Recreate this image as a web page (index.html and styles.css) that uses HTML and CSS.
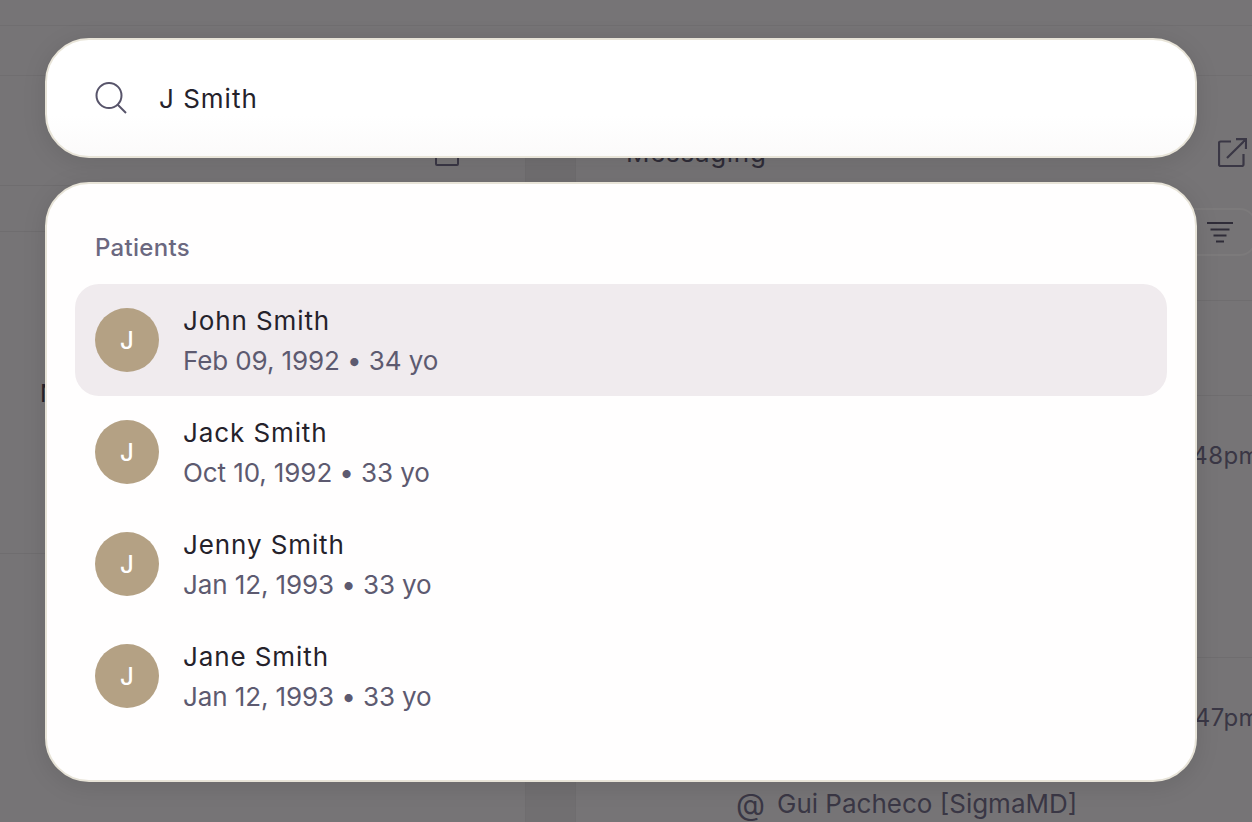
FILE: index.html
```html
<!DOCTYPE html>
<html lang="en">
<head>
    <meta charset="UTF-8">
    <meta name="viewport" content="width=device-width, initial-scale=1.0">
    <title>Patient search</title>
    <link rel="stylesheet" href="styles.css">
</head>
<body>
    <!-- Dimmed app behind the search overlay -->
    <div class="app">
        <div class="topbar"></div>
        <div class="subbar"></div>
        <div class="columns">
            <div class="left-pane">
                <div class="left-head">
                    <span class="head-square"></span>
                </div>
                <div class="left-tabs"></div>
                <div class="left-card">
                    <span class="card-letter">N</span>
                </div>
            </div>
            <div class="gutter"></div>
            <div class="right-pane">
                <div class="right-head">
                    <span class="right-title">Messaging</span>
                    <svg class="open-icon" width="29" height="29" viewBox="0 0 29 29" fill="none" stroke="#3a3745" stroke-width="2.2">
                        <path d="M13 3.500H2.500a1.500 1.500 0 0 0-1.500 1.500V26.500a1.500 1.500 0 0 0 1.500 1.500H24a1.500 1.500 0 0 0 1.500-1.500V16"/>
                        <path d="M18 1.200H28V11M28 1.200L9 20"/>
                    </svg>
                </div>
                <div class="filter-row">
                    <div class="filter-btn">
                        <svg width="28" height="22" viewBox="0 0 28 22" stroke="#2f2c38" stroke-width="2" fill="none">
                            <path d="M1 1H27M4.500 7.500H23.500M7.500 13.500H20.500M10 19.500H18"/>
                        </svg>
                    </div>
                </div>
                <div class="thread thread-short"></div>
                <div class="thread thread-tall"><span class="thread-time">2:48pm</span></div>
                <div class="thread thread-last">
                    <span class="thread-time">2:47pm</span>
                    <div class="mention">
                        <span class="mention-at">@</span>
                        <span>Gui Pacheco [SigmaMD]</span>
                    </div>
                </div>
            </div>
        </div>
    </div>

    <div class="overlay">
        <div class="search-box">
            <svg class="search-icon" width="32" height="32" viewBox="0 0 32 32" fill="none" stroke="#57546a" stroke-width="2">
                <circle cx="14" cy="13.500" r="12.500"/>
                <path d="M22.500 22.500L31 31"/>
            </svg>
            <span class="search-text">J Smith</span>
        </div>

        <div class="results">
            <div class="results-label">Patients</div>

            <div class="patient active">
                <div class="avatar">J</div>
                <div class="patient-info">
                    <div class="patient-name">John Smith</div>
                    <div class="patient-meta">Feb 09, 1992 • 34 yo</div>
                </div>
            </div>
            <div class="patient">
                <div class="avatar">J</div>
                <div class="patient-info">
                    <div class="patient-name">Jack Smith</div>
                    <div class="patient-meta">Oct 10, 1992 • 33 yo</div>
                </div>
            </div>
            <div class="patient">
                <div class="avatar">J</div>
                <div class="patient-info">
                    <div class="patient-name">Jenny Smith</div>
                    <div class="patient-meta">Jan 12, 1993 • 33 yo</div>
                </div>
            </div>
            <div class="patient">
                <div class="avatar">J</div>
                <div class="patient-info">
                    <div class="patient-name">Jane Smith</div>
                    <div class="patient-meta">Jan 12, 1993 • 33 yo</div>
                </div>
            </div>
        </div>
    </div>
</body>
</html>
```

FILE: styles.css
```css
* {
    box-sizing: border-box;
}

html, body {
    margin: 0;
    height: 100%;
    overflow: hidden;
}

body {
    font-family: Inter, 'Noto Sans', sans-serif;
    background: #767476;
    color: #25222b;
}

/* Background app */
.app {
    height: 822px;
    display: flex;
    flex-direction: column;
    overflow: hidden;
    background: #767476;
}

.topbar {
    height: 26px;
    flex-shrink: 0;
    border-bottom: 1px solid #706e70;
}

.subbar {
    height: 50px;
    flex-shrink: 0;
    border-bottom: 1px solid #706e70;
}

.columns {
    flex: 1;
    min-height: 0;
    display: flex;
}

.left-pane {
    width: 526px;
    flex-shrink: 0;
    border-right: 1px solid #6f6d6f;
}

.left-head {
    height: 110px;
    border-bottom: 1px solid #6f6d6f;
    padding: 64px 0 0 435px;
}

.head-square {
    display: block;
    width: 24px;
    height: 26px;
    border: 2px solid #3a3745;
    border-radius: 2px;
}

.left-tabs {
    height: 46px;
    border-bottom: 1px solid #6f6d6f;
}

.left-card {
    height: 322px;
    border-bottom: 1px solid #6f6d6f;
    padding: 148px 0 0 40px;
}

.card-letter {
    font-size: 24px;
    line-height: 28px;
    color: #25222b;
}

.gutter {
    width: 49px;
    flex-shrink: 0;
    background: #716f71;
}

.right-pane {
    flex: 1;
    min-width: 0;
    border-left: 1px solid #6f6d6f;
}

.right-head {
    height: 132px;
    display: flex;
    justify-content: space-between;
    padding: 59px 5px 0 50px;
}

.right-title {
    font-size: 26px;
    line-height: 36px;
    letter-spacing: 0.7px;
    color: #2f2c38;
}

.open-icon {
    margin-top: 3px;
}

.filter-row {
    height: 93px;
    border-bottom: 1px solid #6f6d6f;
    padding-left: 600px;
}

.filter-btn {
    width: 80px;
    height: 48px;
    padding: 12px 0 0 28px;
    border: 2px solid #7c7a7b;
    border-radius: 16px;
}

.thread {
    position: relative;
    border-bottom: 1px solid #6f6d6f;
}

.thread-short {
    height: 95px;
}

.thread-tall {
    height: 262px;
}

.thread-last {
    height: 164px;
    border-bottom: none;
}

.thread-time {
    position: absolute;
    top: 46px;
    right: -8px;
    font-size: 24px;
    line-height: 28px;
    letter-spacing: 0.4px;
    color: #3a3745;
}

.mention {
    position: absolute;
    left: 160px;
    top: 130px;
    display: flex;
    align-items: center;
    gap: 10px;
    font-size: 26px;
    line-height: 32px;
    color: #3a3745;
    white-space: nowrap;
}

.mention-at {
    font-size: 30px;
    line-height: 30px;
    margin-right: 2px;
}

/* Search overlay */
.overlay {
    position: absolute;
    top: 38px;
    left: 45px;
    width: 1152px;
    display: flex;
    flex-direction: column;
    gap: 24px;
}

.search-box {
    height: 120px;
    display: flex;
    align-items: center;
    padding-left: 48px;
    background: linear-gradient(#ffffff 65%, #fbfafa);
    border: 2px solid #e8e4d8;
    border-radius: 44px;
    box-shadow: 0 4px 24px rgba(0, 0, 0, 0.1);
}

.search-text {
    margin-left: 32px;
    font-size: 26px;
    letter-spacing: 1px;
    color: #25222b;
}

.results {
    height: 600px;
    padding: 48px 28px 0;
    background: #fffefe;
    border: 2px solid #e8e4d8;
    border-radius: 44px;
    box-shadow: 0 4px 24px rgba(0, 0, 0, 0.1);
}

.results-label {
    height: 52px;
    padding-left: 20px;
    font-size: 24px;
    font-weight: 500;
    line-height: 32px;
    letter-spacing: 0.3px;
    color: #6b6880;
}

.patient {
    height: 112px;
    display: flex;
    align-items: center;
    gap: 24px;
    padding: 0 20px;
    border-radius: 24px;
}

.patient.active {
    background: #f0ebee;
}

.avatar {
    width: 64px;
    height: 64px;
    display: flex;
    align-items: center;
    justify-content: center;
    flex-shrink: 0;
    border-radius: 50%;
    background: #b4a184;
    color: #ffffff;
    font-size: 24px;
    font-weight: 500;
}

.patient-info {
    padding-top: 2px;
}

.patient-name {
    font-size: 26px;
    line-height: 40px;
    letter-spacing: 0.9px;
    color: #25222b;
}

.patient-meta {
    font-size: 26px;
    line-height: 40px;
    letter-spacing: -0.1px;
    color: #5d5a70;
}
```
